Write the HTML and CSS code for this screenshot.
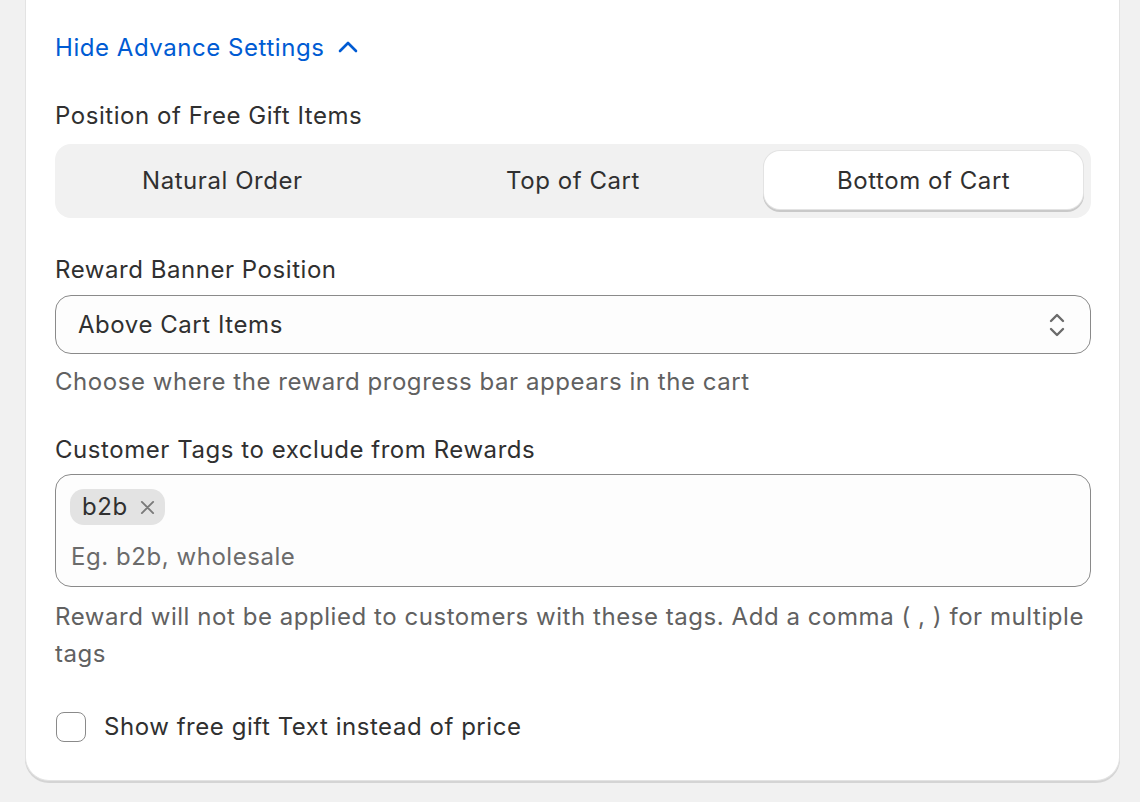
FILE: index.html
```html
<!DOCTYPE html>
<html lang="en">
<head>
<meta charset="utf-8">
<title>Advance Settings</title>
<link rel="stylesheet" href="styles.css">
</head>
<body>
<div class="card">
  <button class="toggle-link" type="button">
    <span>Hide Advance Settings</span>
    <svg class="caret" width="20" height="14" viewBox="0 0 20 14" aria-hidden="true">
      <path d="M2 11 L10 3 L18 11" fill="none" stroke="currentColor" stroke-width="2.6" stroke-linecap="round" stroke-linejoin="round"/>
    </svg>
  </button>

  <div class="field field-position">
    <div class="label">Position of Free Gift Items</div>
    <div class="segmented">
      <button class="segment" type="button">Natural Order</button>
      <button class="segment" type="button">Top of Cart</button>
      <button class="segment is-active" type="button">Bottom of Cart</button>
    </div>
  </div>

  <div class="field field-banner">
    <div class="label">Reward Banner Position</div>
    <div class="select">
      <span class="select-value">Above Cart Items</span>
      <svg class="select-icon" width="18" height="28" viewBox="0 0 18 28" aria-hidden="true">
        <path d="M3 10 L9 4 L15 10" fill="none" stroke="currentColor" stroke-width="2.4" stroke-linecap="round" stroke-linejoin="round"/>
        <path d="M3 18 L9 24 L15 18" fill="none" stroke="currentColor" stroke-width="2.4" stroke-linecap="round" stroke-linejoin="round"/>
      </svg>
    </div>
    <div class="help">Choose where the reward progress bar appears in the cart</div>
  </div>

  <div class="field field-tags">
    <div class="label">Customer Tags to exclude from Rewards</div>
    <div class="tag-input">
      <div class="tags">
        <span class="tag">b2b
          <svg class="tag-remove" width="16" height="16" viewBox="0 0 16 16" aria-hidden="true">
            <path d="M2 2 L14 14 M14 2 L2 14" fill="none" stroke="currentColor" stroke-width="2" stroke-linecap="round"/>
          </svg>
        </span>
      </div>
      <div class="placeholder">Eg. b2b, wholesale</div>
    </div>
    <div class="help help-tags">Reward will not be applied to customers with these tags. Add a comma ( , ) for multiple tags</div>
  </div>

  <label class="checkbox-row">
    <span class="checkbox"></span>
    <span class="checkbox-label">Show free gift Text instead of price</span>
  </label>
</div>
</body>
</html>
```

FILE: styles.css
```css
* {
  box-sizing: border-box;
}

html, body {
  margin: 0;
  padding: 0;
}

body {
  background: #f1f1f1;
  font-family: Inter, "Noto Sans", sans-serif;
  font-size: 24px;
  line-height: 36px;
  letter-spacing: 0.55px;
  color: #303030;
  overflow: hidden;
  height: 802px;
}

.card {
  margin: -24px 0 0 25px;
  width: 1095px;
  background: #ffffff;
  border-radius: 0 0 24px 24px;
  border: 1px solid #e3e3e3;
  border-top: none;
  box-shadow: 0 2px 0 #d4d4d4;
  padding: 54px 28px 35px 29px;
}

.toggle-link {
  display: inline-flex;
  align-items: center;
  gap: 14px;
  padding: 0;
  border: none;
  background: none;
  font: inherit;
  letter-spacing: inherit;
  color: #005bd3;
  cursor: pointer;
}

.caret {
  margin-top: -2px;
}

.field {
  margin-top: 32px;
}

.label {
  margin-bottom: 8px;
}

.field-position .label {
  margin-bottom: 10px;
}

.field-banner {
  margin-top: 34px;
}

.field-banner .label {
  margin-bottom: 7px;
}

.field-tags .label {
  margin-bottom: 6px;
}

.segmented {
  display: flex;
  gap: 32px;
  background: #f1f1f1;
  border-radius: 16px;
  padding: 7px 8px 9px;
}

.segment {
  flex: 1;
  height: 58px;
  border: none;
  background: transparent;
  border-radius: 16px;
  font: inherit;
  letter-spacing: inherit;
  color: #303030;
  padding-top: 3px;
  cursor: pointer;
}

.segment.is-active {
  background: #ffffff;
  box-shadow: 0 0 0 1px #e3e3e3, 0 2px 0 1px #c9c9c9;
}

.select {
  display: flex;
  align-items: center;
  justify-content: space-between;
  height: 59px;
  border: 1px solid #8a8a8a;
  border-radius: 16px;
  background: #fdfdfd;
  padding: 0 24px 0 22px;
}

.select-icon {
  color: #6b6b6b;
}

.help {
  margin-top: 10px;
  color: #616161;
}

.tag-input {
  height: 113px;
  border: 1px solid #8a8a8a;
  border-radius: 16px;
  background: #fdfdfd;
  padding: 14px 14px 0;
}

.tags {
  display: flex;
}

.tag {
  display: inline-flex;
  align-items: center;
  gap: 12px;
  height: 36px;
  padding: 0 10px 0 12px;
  background: #e3e3e3;
  border-radius: 14px;
  color: #303030;
}

.tag-remove {
  color: #7a7a7a;
  width: 15px;
  height: 15px;
}

.placeholder {
  margin-top: 14px;
  padding-left: 1px;
  color: #6b6b6b;
}

.help-tags {
  margin-top: 11px;
  line-height: 37px;
}

.checkbox-row {
  display: flex;
  align-items: center;
  gap: 18px;
  margin-top: 37px;
  height: 36px;
  padding-left: 1px;
}

.checkbox {
  width: 30px;
  height: 30px;
  border: 1px solid #8a8a8a;
  border-radius: 8px;
  background: #ffffff;
}
```
